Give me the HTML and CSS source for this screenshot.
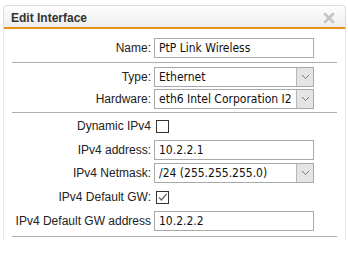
FILE: index.html
```html
<!DOCTYPE html>
<html>

<head>
    <title>Edit Interface</title>
    <link rel="stylesheet" href="styles.css">
</head>

<body>
    <div class="dialog">
        <div class="dialog-header">
            <span class="dialog-title">Edit Interface</span>
            <span class="close-btn">
                <svg width="12" height="12" viewBox="0 0 12 12">
                    <path d="M2 2 L10 10 M10 2 L2 10" stroke="#c4c4c4" stroke-width="2.6" stroke-linecap="round" />
                </svg>
            </span>
        </div>

        <div class="dialog-body">
            <div class="section section-name">
                <div class="form-row">
                    <label>Name:</label>
                    <div class="text-input">PtP Link Wireless</div>
                </div>
            </div>

            <div class="section section-type">
                <div class="form-row">
                    <label>Type:</label>
                    <div class="select-input">
                        <span class="select-value">Ethernet</span>
                        <span class="select-arrow">
                            <svg width="9" height="6" viewBox="0 0 9 6">
                                <path d="M1 1 L4.5 4.5 L8 1" fill="none" stroke="#7a7a7a" stroke-width="1" />
                            </svg>
                        </span>
                    </div>
                </div>
                <div class="form-row">
                    <label>Hardware:</label>
                    <div class="select-input">
                        <span class="select-value">eth6 Intel Corporation I2</span>
                        <span class="select-arrow">
                            <svg width="9" height="6" viewBox="0 0 9 6">
                                <path d="M1 1 L4.5 4.5 L8 1" fill="none" stroke="#7a7a7a" stroke-width="1" />
                            </svg>
                        </span>
                    </div>
                </div>
            </div>

            <div class="section section-ip">
                <div class="form-row check-row">
                    <label>Dynamic IPv4</label>
                    <span class="checkbox"></span>
                </div>
                <div class="form-row">
                    <label>IPv4 address:</label>
                    <div class="text-input">10.2.2.1</div>
                </div>
                <div class="form-row">
                    <label>IPv4 Netmask:</label>
                    <div class="select-input">
                        <span class="select-value">/24 (255.255.255.0)</span>
                        <span class="select-arrow">
                            <svg width="9" height="6" viewBox="0 0 9 6">
                                <path d="M1 1 L4.5 4.5 L8 1" fill="none" stroke="#7a7a7a" stroke-width="1" />
                            </svg>
                        </span>
                    </div>
                </div>
                <div class="form-row check-row">
                    <label>IPv4 Default GW:</label>
                    <span class="checkbox">
                        <svg width="11" height="11" viewBox="0 0 11 11">
                            <path d="M2 5.5 L4.5 8 L9.5 2" fill="none" stroke="#666" stroke-width="1.2" />
                        </svg>
                    </span>
                </div>
                <div class="form-row">
                    <label>IPv4 Default GW address</label>
                    <div class="text-input">10.2.2.2</div>
                </div>
            </div>
        </div>
    </div>
</body>

</html>
```

FILE: styles.css
```css
body {
    font-family: 'Liberation Sans', Arial, sans-serif;
    font-size: 12px;
    color: #222;
    background: #fff;
    margin: 0;
    padding: 5px 3px;
}

.dialog {
    width: 343px;
}

.dialog-header {
    display: flex;
    align-items: center;
    justify-content: space-between;
    height: 23px;
    padding: 0 10px 0 7px;
    background: linear-gradient(#fdfdfd, #ededed);
    border: 1px solid #dcdcdc;
    border-bottom: none;
    border-radius: 4px 4px 0 0;
    box-shadow: inset 0 -2px 0 #e8901c;
}

.dialog-title {
    font-weight: bold;
    color: #333;
    font-size: 12px;
}

.close-btn {
    display: flex;
    margin-top: 1px;
}

.dialog-body {
    border-left: 1px dotted #d4d4d4;
    border-right: 1px dotted #d4d4d4;
    padding: 0 8px 3px 8px;
}

.section {
    display: flex;
    flex-direction: column;
    border-bottom: 1px solid #adadad;
}

.section-name {
    padding: 9px 0 4px;
}

.section-type {
    padding: 4px 0 3px;
    gap: 2px;
}

.section-ip {
    padding: 2px 0 5px;
    gap: 3px;
}

.form-row {
    display: grid;
    grid-template-columns: 139px 160px;
    column-gap: 3px;
    align-items: center;
}

.form-row label {
    text-align: right;
    white-space: nowrap;
}

.text-input,
.select-input {
    height: 20px;
    box-sizing: border-box;
    border: 1px solid #a9a9a9;
    background: #fff;
    font-family: 'DejaVu Sans Condensed', 'DejaVu Sans', sans-serif;
    font-size: 12px;
    color: #111;
}

.text-input {
    padding: 2px 4px;
    line-height: 15px;
}

.select-input {
    display: flex;
    align-items: stretch;
}

.select-value {
    flex: 1;
    overflow: hidden;
    white-space: nowrap;
    padding: 1px 4px;
    line-height: 16px;
}

.select-arrow {
    width: 16px;
    display: flex;
    align-items: center;
    justify-content: center;
    background: #e4e4e4;
    border-left: 1px solid #b8b8b8;
}

.check-row {
    height: 22px;
}

.checkbox {
    width: 13px;
    height: 13px;
    box-sizing: border-box;
    border: 1px solid #333;
    background: #fff;
    margin-left: 2px;
    display: flex;
    align-items: center;
    justify-content: center;
}
```
